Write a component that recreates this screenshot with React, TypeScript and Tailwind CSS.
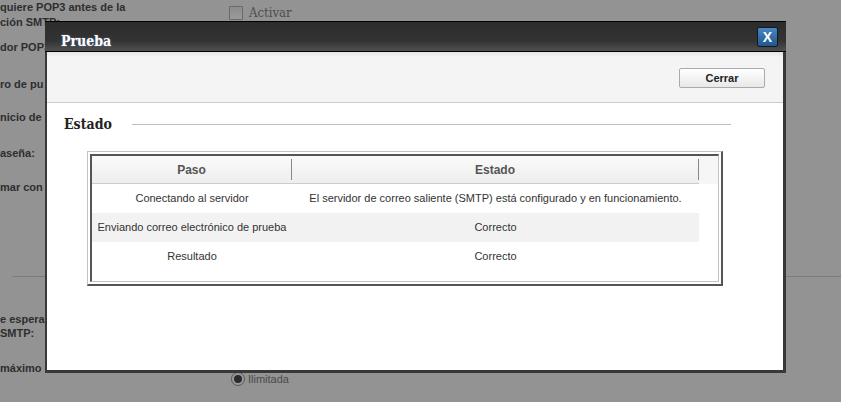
import React from "react";

const sans = { fontFamily: '"Liberation Sans", Arial, sans-serif' };
const serif = { fontFamily: '"DejaVu Serif Condensed", "DejaVu Serif", serif' };

function Label({ children, className = "" }: { children: React.ReactNode; className?: string }) {
  return (
    <div className={"text-[11px] font-bold text-[#2e2e2e] whitespace-nowrap " + className}>{children}</div>
  );
}

export default function App() {
  const rows = [
    ["Conectando al servidor", "El servidor de correo saliente (SMTP) está configurado y en funcionamiento."],
    ["Enviando correo electrónico de prueba", "Correcto"],
    ["Resultado", "Correcto"],
  ];
  return (
    <div className="relative w-[841px] h-[402px] overflow-hidden bg-[#939393]" style={sans}>
      {/* background page */}
      <div className="flex flex-col">
        <div className="flex h-[30px]">
          <Label className="w-[229px] leading-[15px]">
            <div>quiere POP3 antes de la</div>
            <div>ción SMTP:</div>
          </Label>
          <div className="flex items-center gap-[6px] pt-[6px] h-[20px]">
            <div className="w-[14px] h-[14px] border border-[#6a6a6a] bg-[linear-gradient(#8c8c8c,#9a9a9a)] rounded-[1px]" />
            <span className="text-[13px] text-[#4e4e4e] leading-[14px]" style={serif}>Activar</span>
          </div>
        </div>
        <Label className="mt-[10px] leading-[15px]">dor POP3</Label>
        <Label className="mt-[22px] leading-[15px]">ro de pu</Label>
        <Label className="mt-[18px] leading-[15px]">nicio de</Label>
        <Label className="mt-[21px] leading-[15px]">aseña:</Label>
        <Label className="mt-[19px] leading-[15px]">mar con</Label>
        <div className="mt-[81px] ml-[12px] h-px bg-[#7c7c7c]" />
        <Label className="mt-[35px] leading-[14px]">
          <div>e espera</div>
          <div>SMTP:</div>
        </Label>
        <div className="flex mt-[21px]">
          <Label className="w-[231px] leading-[15px]">máximo d</Label>
          <div className="flex items-center gap-[3px] mt-[10px]">
            <div className="w-[14px] h-[14px] rounded-full border border-[#555] bg-[#9a9a9a] flex items-center justify-center">
              <div className="w-[8px] h-[8px] rounded-full bg-[#2a2a2a]" />
            </div>
            <span className="text-[11px] text-[#4a4a4a]">Ilimitada</span>
          </div>
        </div>
      </div>

      {/* dialog */}
      <div className="absolute left-[45px] top-[21px] w-[741px] h-[352px] flex flex-col">
        <div className="h-[31px] border-y border-black bg-[linear-gradient(#2c2c2c,#333333_65%,#505050)] flex items-center justify-between pl-[16px] pr-[8px]">
          <span className="pt-[9px] text-white text-[14px] font-bold leading-[16px] [text-shadow:0_0_2px_#6688aa]" style={serif}>Prueba</span>
          <div className="w-[21px] h-[20px] rounded-[2px] border border-[#0e1a28] bg-[linear-gradient(#4a86c2,#21558e)] flex items-center justify-center">
            <span className="text-white text-[14px] font-bold leading-none">X</span>
          </div>
        </div>
        <div className="flex-1 flex flex-col border-l-[2px] border-r-[3px] border-b-[3px] border-[#383838] bg-white">
          <div className="h-[51px] border-b border-[#cccccc] bg-[linear-gradient(#e4e4e4,#f4f4f4_5px,#f4f4f4)] flex items-start justify-end pr-[18px] pt-[16px]">
            <button className="w-[86px] h-[20px] rounded-[2px] border border-[#aaaaaa] bg-[linear-gradient(#ffffff,#e8e8e8)] text-[11px] font-bold text-[#222] leading-none">
              Cerrar
            </button>
          </div>
          <div className="flex flex-col pl-[17px] pr-[52px]">
            <div className="flex items-center mt-[11px] h-[20px]">
              <span className="text-[14px] font-bold text-[#222]" style={serif}>Estado</span>
              <div className="flex-1 ml-[20px] h-px bg-[#bdbdbd]" />
            </div>
            <div className="ml-[23px] mt-[17px] w-[636px] h-[135px] border-t border-l border-[#c2c2c2] border-r-[2px] border-b-[2px] border-r-[#555] border-b-[#555] p-[2px]">
              <div className="w-full h-full border-t-[2px] border-l-[2px] border-[#555] border-r border-b border-r-[#c2c2c2] border-b-[#c2c2c2] flex">
                <div className="w-[607px] flex flex-col">
                  <div className="h-[28px] flex border-b border-[#cccccc] bg-[linear-gradient(#fafafa,#eeeeee)]">
                    <div className="w-[200px] flex items-center justify-center text-[12px] font-bold text-[#555] border-r border-[#888] my-[3px]">Paso</div>
                    <div className="flex-1 flex items-center justify-center text-[12px] font-bold text-[#555] border-r border-[#888] my-[3px]">Estado</div>
                  </div>
                  {rows.map((r, i) => (
                    <div key={i} className={"h-[29px] flex items-center text-[11px] text-[#333] " + (i === 1 ? "bg-[#f2f2f2]" : "")}>
                      <div className="w-[200px] text-center whitespace-nowrap">{r[0]}</div>
                      <div className="flex-1 text-center whitespace-nowrap">{r[1]}</div>
                    </div>
                  ))}
                </div>
                <div className="flex-1 flex flex-col">
                  <div className="h-[28px] bg-[#f6f6f6]" />
                </div>
              </div>
            </div>
          </div>
        </div>
      </div>
    </div>
  );
}
